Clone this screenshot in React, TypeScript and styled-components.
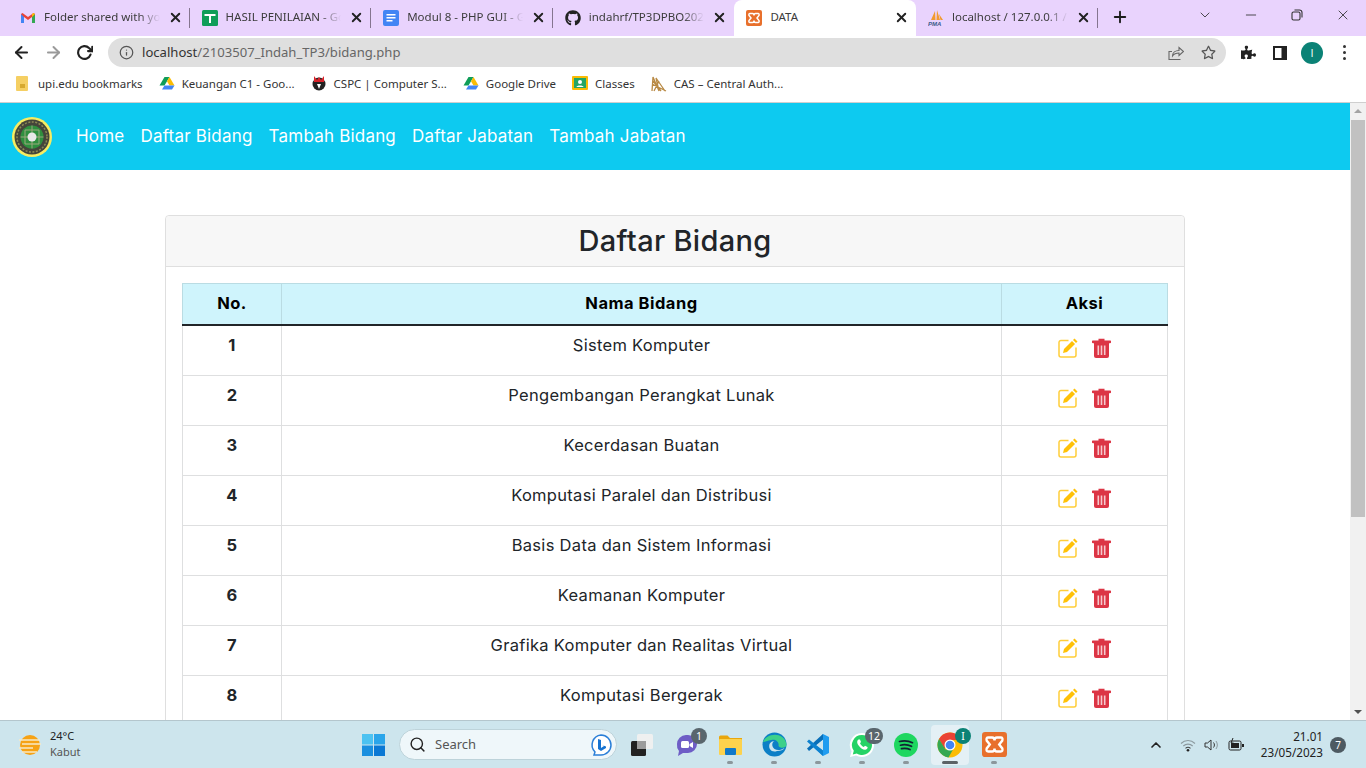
import React from 'react'
import styled, { createGlobalStyle } from 'styled-components'
import { FaGithub, FaPuzzlePiece, FaRegStar } from 'react-icons/fa'
import { FiArrowLeft, FiArrowRight, FiChevronDown, FiChevronUp, FiInfo, FiMinus, FiPlus, FiRotateCw, FiSearch, FiX } from 'react-icons/fi'

const GlobalStyle = createGlobalStyle`
  html, body { margin: 0; padding: 0; height: 100%; overflow: hidden; }
  body { font-family: "Open Sans", "Liberation Sans", sans-serif; background: #fff; }
  * { box-sizing: border-box; }
`

const Screen = styled.div`
  width: 1366px; height: 768px; display: flex; flex-direction: column; overflow: hidden;
`
const TabStrip = styled.div`
  height: 36px; flex: none; background: #e9d3fd; display: flex; align-items: flex-start; padding: 0 0 0 8px;
`
const Tab = styled.div<{ $active?: boolean; $sep?: boolean }>`
  width: 181.6px; height: 36px; flex: none; display: flex; align-items: center; padding: 0 7px 1px 12px; gap: 8px;
  font-family: "Noto Sans", sans-serif; font-size: 11.5px; color: #3c3c3c; position: relative;
  background: ${p => (p.$active ? '#fff' : 'transparent')};
  border-radius: ${p => (p.$active ? '8px 8px 0 0' : '0')};
  &::after {
    content: ''; position: absolute; right: 0; top: 8px; height: 20px; width: 1px;
    background: ${p => (p.$sep ? '#85758f' : 'transparent')};
  }
`
const TabTitle = styled.span<{ $fade?: boolean }>`
  flex: 1; min-width: 0; white-space: nowrap; overflow: hidden; padding-bottom: 2px;
  ${p => p.$fade && 'mask-image: linear-gradient(90deg, #000 82%, transparent 100%);'}
`
const TabClose = styled.span`
  display: flex; color: #222; font-size: 15px;
`
const NewTab = styled.span`
  display: flex; margin-left: 13px; margin-top: 8px; font-size: 18px; color: #1c1c1c;
`
const WindowControls = styled.div`
  margin-left: auto; display: flex; align-items: center; height: 29px; color: #333;
`
const WindowButton = styled.span`
  width: 46px; display: flex; justify-content: center; font-size: 16px;
`
const Toolbar = styled.div`
  height: 33px; flex: none; background: #fff; display: flex; align-items: center; padding: 0 0 0 12px;
`
const NavIcon = styled.span<{ $muted?: boolean }>`
  width: 32px; display: flex; font-size: 19px; color: ${p => (p.$muted ? '#9a9a9a' : '#222')};
`
const Omnibox = styled.div`
  width: 1118px; height: 29px; background: #dfdfdf; border-radius: 15px; display: flex; align-items: center; padding: 0 10px 0 11px;
  font-family: "Noto Sans", sans-serif; font-size: 13.1px; color: #666;
`
const UrlText = styled.span`
  padding-bottom: 2px;
  b { font-weight: 400; color: #333; }
`
const OmniIcon = styled.span<{ $left?: boolean }>`
  display: flex; font-size: 15px; color: #555; margin: ${p => (p.$left ? '0 8px 0 0' : '0 0 0 17px')};
`
const Spacer = styled.span`
  flex: 1;
`
const ToolbarEnd = styled.div`
  display: flex; align-items: center; margin-left: 6px; color: #222;
`
const ToolSlot = styled.span`
  width: 32px; display: flex; align-items: center; justify-content: center;
`
const Avatar = styled.span`
  width: 22px; height: 22px; border-radius: 50%; background: #0b8276; color: #fff; font-size: 11px;
  display: flex; align-items: center; justify-content: center;
`
const Kebab = styled.span`
  display: flex; flex-direction: column; gap: 3px;
  i { width: 3px; height: 3px; border-radius: 50%; background: #333; display: block; }
`
const Bookmarks = styled.div`
  height: 34px; flex: none; background: #fff; display: flex; align-items: center; padding: 0 0 5px 16px; gap: 16px;
  border-bottom: 1px solid #cfcfcf; font-family: "Noto Sans", sans-serif; font-size: 11.5px; color: #333;
`
const Bookmark = styled.span`
  display: flex; align-items: center; gap: 7px; white-space: nowrap;
`
const Viewport = styled.div`
  flex: 1; min-height: 0; display: flex; overflow: hidden;
`
const Page = styled.div`
  flex: 1; min-width: 0; overflow: hidden; background: #fff; font-family: "Inter", "Liberation Sans", sans-serif;
`
const Navbar = styled.nav`
  height: 67px; background: #0dcaf0; display: flex; align-items: center; padding: 0 12px;
`
const Menu = styled.ul`
  list-style: none; margin: 0 0 0 24px; padding: 0 0 2px; display: flex; gap: 16px;
`
const MenuLink = styled.li`
  color: #fff; font-size: 17px; font-weight: 400; letter-spacing: .2px; white-space: nowrap;
`
const Card = styled.section`
  width: 1020px; margin: 45px 0 0 165px; border: 1px solid #dfdfdf; border-radius: 4px; background: #fff;
`
const CardHeader = styled.header`
  height: 51px; background: #f7f7f7; border-bottom: 1px solid #dfdfdf; border-radius: 4px 4px 0 0;
  display: flex; align-items: center; justify-content: center; padding-bottom: 2px;
  font-size: 29px; font-weight: 500; letter-spacing: .3px; color: #212529;
`
const CardBody = styled.div`
  padding: 16px;
`
const Table = styled.table`
  width: 985px; border-collapse: collapse; table-layout: fixed; color: #212529;
`
const HeadCell = styled.th<{ $w: number }>`
  width: ${p => p.$w}px; height: 41px; background: #cff4fc; border: 1px solid #badce3; border-bottom: 2px solid #212529;
  font-size: 16.5px; font-weight: 700; letter-spacing: .5px; color: #000; padding: 0 0 2px;
`
const Row = styled.tr`
  height: 50px;
  &:first-child { height: 51px; }
`
const Cell = styled.td<{ $bold?: boolean }>`
  border: 1px solid #dedfe0; text-align: center; vertical-align: top; padding: 7px 8px 0;
  font-size: 16.5px; line-height: 24px; letter-spacing: .3px; font-weight: ${p => (p.$bold ? 700 : 400)}; white-space: nowrap;
`
const Actions = styled.div`
  display: flex; justify-content: center; gap: 14px; padding-top: 5px;
`
const Scrollbar = styled.div`
  width: 16px; flex: none; background: #f1f1f1; display: flex; flex-direction: column; align-items: center; justify-content: space-between; position: relative;
`
const ScrollThumb = styled.div`
  position: absolute; top: 17px; left: 1px; right: 1px; height: 397px; background: #c1c1c1;
`
const ScrollArrow = styled.i<{ $down?: boolean }>`
  display: block; margin: 6px 0; width: 0; height: 0; border-left: 4px solid transparent; border-right: 4px solid transparent;
  ${p => (p.$down ? 'border-top: 4px solid #505050;' : 'border-bottom: 4px solid #a3a3a3;')}
`
const Taskbar = styled.footer`
  height: 48px; flex: none; background: #cde5ed; border-top: 1px solid #b4c6cd; display: flex; align-items: center;
  font-family: "Noto Sans", sans-serif; color: #222;
`
const Weather = styled.div`
  width: 362px; flex: none; display: flex; align-items: center; gap: 9px; padding-left: 19px;
`
const WeatherText = styled.div`
  display: flex; flex-direction: column; font-size: 11px; line-height: 16px; padding-bottom: 2px;
  small { font-size: 11px; color: #555; }
`
const Dock = styled.div`
  display: flex; align-items: center;
`
const SearchBox = styled.div`
  width: 218px; height: 31px; margin: 0 3px 0 14px; border-radius: 16px; background: #eff7fa; border: 1px solid #bdd3da; display: flex; align-items: center; padding: 0 3px 0 9px;
  font-size: 13px; color: #555; gap: 9px;
`
const SearchLabel = styled.span`
  padding-bottom: 2px;
`
const DockItem = styled.span<{ $active?: boolean; $dot?: boolean }>`
  width: 44px; height: 40px; display: flex; align-items: center; justify-content: center; position: relative;
  &::before {
    content: ''; position: absolute; inset: 0 3px; border-radius: 4px;
    background: ${p => (p.$active ? '#e4f0f5' : 'transparent')};
  }
  svg { position: relative; }
  &::after {
    content: ''; position: absolute; bottom: 1px; left: 50%; transform: translateX(-50%); height: 3px; border-radius: 2px;
    width: ${p => (p.$active ? '16px' : '6px')}; background: ${p => (p.$active ? '#5c6367' : '#8b979c')};
    display: ${p => (p.$dot || p.$active ? 'block' : 'none')};
  }
`
const CountBadge = styled.b<{ $color?: string }>`
  position: absolute; top: 3px; right: 1px; min-width: 16px; height: 16px; padding: 0 3px; border-radius: 8px; background: ${p => p.$color || '#59666d'};
  color: #fff; font-size: 10.5px; font-weight: 400; display: flex; align-items: center; justify-content: center;
`
const Tray = styled.div`
  margin-left: auto; display: flex; align-items: center; color: #222; padding-right: 20px;
`
const TrayIcon = styled.span<{ $gap: number }>`
  display: flex; font-size: 16px; margin-right: ${p => p.$gap}px;
`
const Clock = styled.div`
  text-align: right; font-size: 11.7px; line-height: 16px; margin-right: 7px; padding-bottom: 2px;
`
const Notify = styled.span`
  width: 16px; height: 16px; border-radius: 50%; background: #4d5a62; color: #fff; font-size: 10px; display: flex; align-items: center; justify-content: center;
`

const EditIcon = () => (
  <svg width="20" height="20" viewBox="0 0 20 20">
    <path d="M10.500 2.500H3A2 2 0 0 0 1 4.500V17a2 2 0 0 0 2 2h13a2 2 0 0 0 2-2V9.500" fill="none" stroke="#ffc107" strokeWidth="1.500" opacity=".8" />
    <path d="M5 15l1-4 8-8 3 3-8 8z" fill="#ffc107" />
    <path d="M15 2l1.500-1.500 3 3L18 5z" fill="#ffc107" />
  </svg>
)
const TrashIcon = () => (
  <svg width="19" height="20" viewBox="0 0 19 20">
    <path d="M6.500 2.500V.8h6v1.700H18a1 1 0 0 1 0 2.700H1a1 1 0 0 1 0-2.700z" fill="#dc3545" />
    <path d="M2 5h15v13a2 2 0 0 1-2 2H4a2 2 0 0 1-2-2z" fill="#dc3545" />
    <path d="M5.500 7.500h1.600v9.500H5.500zM8.700 7.500h1.600v9.500H8.700zM11.900 7.500h1.600v9.500h-1.600z" fill="#f6c9cd" />
  </svg>
)
const GmailIcon = () => (
  <svg width="16" height="16" viewBox="0 0 16 16">
    <path d="M1 4v9h3V7l4 3 4-3v6h3V4l-1.500-1L8 7 2.500 3z" fill="#ea4335" />
    <path d="M1 4v9h3V7z" fill="#4285f4" />
    <path d="M15 4v9h-3V7z" fill="#34a853" />
    <path d="M12 7l3-3-1.500-1L12 4z" fill="#fbbc04" />
  </svg>
)
const SheetsIcon = () => (
  <svg width="16" height="16" viewBox="0 0 16 16">
    <rect width="16" height="16" rx="1.500" fill="#0f9d58" />
    <path d="M2.500 4h11v2h-4.500v7H7V6H2.500z" fill="#fff" />
  </svg>
)
const DocsIcon = () => (
  <svg width="16" height="16" viewBox="0 0 16 16">
    <rect width="16" height="16" rx="2" fill="#4285f4" />
    <path d="M3.500 4h9v1.500h-9zM3.500 7h9v1.500h-9zM3.500 10h6v1.500h-6z" fill="#fff" />
  </svg>
)
const XamppIcon = ({ size = 16 }: { size?: number }) => (
  <svg width={size} height={size} viewBox="0 0 16 16">
    <rect width="16" height="16" rx="2" fill="#e8702c" />
    <path d="M4 3.500h2.500Q8 3.500 8 5.500q0-2 1.500-2H12q1.500 0 1 2L11 8l2 2.500q.5 2-1 2H9.500Q8 12.500 8 10.500q0 2-1.500 2H4q-1.500 0-1-2L5 8 3 5.500q-.5-2 1-2z" fill="none" stroke="#fff" strokeWidth="1.500" />
  </svg>
)
const PmaIcon = () => (
  <svg width="16" height="16" viewBox="0 0 16 16">
    <path d="M3 10 7 1l.5 9zM8.500 10 9 0l3 10zM12.500 10 11 4l4 6z" fill="#f29a2e" />
    <text x="0" y="15.500" fontSize="6" fontStyle="italic" fontWeight="700" fontFamily="Liberation Sans, sans-serif" fill="#3c5a8a">PMA</text>
  </svg>
)
const DriveIcon = () => (
  <svg width="16" height="16" viewBox="0 0 16 16">
    <path d="M5.500 2h5l-5 8.500H.5z" fill="#0f9d58" />
    <path d="M10.500 2l5 8.500h-5L8 6.200z" fill="#fbbc04" />
    <path d="M3 14.500l2.500-4h10l-2.500 4z" fill="#4285f4" />
  </svg>
)
const FolderBookmark = () => (
  <svg width="15" height="15" viewBox="0 0 15 15">
    <rect width="12" height="15" rx="1" fill="#f5cf63" />
    <path d="M4 8h5v4H4z" fill="#d7a92f" />
  </svg>
)
const UpiIcon = () => (
  <svg width="16" height="16" viewBox="0 0 16 16">
    <circle cx="8" cy="9" r="6.500" fill="#222" />
    <path d="M3 1l3 4 2-3 2 3 3-4v6H3z" fill="#d8232a" />
    <path d="M6 9h4l-2 5z" fill="#fff" />
  </svg>
)
const ClassroomIcon = () => (
  <svg width="16" height="16" viewBox="0 0 16 16">
    <rect width="16" height="14" y="1" rx="1" fill="#f9bb04" />
    <rect x="2" y="3" width="12" height="10" fill="#23a566" />
    <circle cx="8" cy="7" r="2" fill="#fff" />
    <path d="M4.500 12c0-2 7-2 7 0z" fill="#fff" />
  </svg>
)
const CasIcon = () => (
  <svg width="16" height="17" viewBox="0 0 16 17" fill="none" stroke="#b98a45" strokeWidth="1.300">
    <path d="M1 16 2 2l6 14L5 3l9 13M1 9l14 7M3 16 8 6M2 6l8 10" />
  </svg>
)
const Seal = () => (
  <svg width="40" height="40" viewBox="0 0 40 40">
    <circle cx="20" cy="20" r="20" fill="#f6ec62" />
    <circle cx="20" cy="20" r="17.500" fill="#44453a" />
    <circle cx="20" cy="20" r="15" fill="none" stroke="#8d8a55" strokeWidth="1.500" strokeDasharray="2 1.500" />
    <circle cx="20" cy="20" r="11.500" fill="#2f8f3e" />
    <path d="M20 8.500v23M8.500 20h23M13 13h14v14H13z" fill="none" stroke="#9aa87c" strokeWidth="1" />
    <circle cx="20" cy="20" r="4.500" fill="#e8e8e8" />
  </svg>
)
const ShareIcon = () => (
  <svg width="16" height="16" viewBox="0 0 16 16" fill="none" stroke="#666" strokeWidth="1.100">
    <path d="M12.500 14.500H1V6.500h3" />
    <path d="M4.500 11c0-3.500 3-5.500 6.500-5.500V2.500l4.500 4-4.500 4V8c-3 0-5 .8-6.500 3z" />
  </svg>
)
const PanelIcon = () => (
  <svg width="14" height="14" viewBox="0 0 14 14">
    <path d="M0 0h14v14H0zM2 2v10h6.500V2z" fill="#222" fillRule="evenodd" />
  </svg>
)
const RestoreIcon = () => (
  <svg width="12" height="12" viewBox="0 0 12 12" fill="none" stroke="#333" strokeWidth="1.100">
    <rect x="1" y="3" width="8" height="8" rx="1.500" />
    <path d="M3.500 1h5A2.500 2.500 0 0 1 11 3.500v5" />
  </svg>
)
const WeatherIcon = () => (
  <svg width="22" height="22" viewBox="0 0 22 22">
    <circle cx="11" cy="11" r="10" fill="#f6a215" />
    <path d="M0 6h21M3 10h19M0 14h14M3 18h15" stroke="#f8e9c5" strokeWidth="1.500" />
  </svg>
)
const StartIcon = () => (
  <svg width="23" height="23" viewBox="0 0 23 23">
    <path d="M0 1h11v10.500H0z" fill="#4cc2f1" />
    <path d="M12 1h11v10.500H12z" fill="#2aa5ea" />
    <path d="M0 12.500h11V23H0z" fill="#1a8fdf" />
    <path d="M12 12.500h11V23H12z" fill="#0a78d4" />
  </svg>
)
const BingIcon = () => (
  <svg width="24" height="24" viewBox="0 0 24 24">
    <path d="M12 2a10 10 0 0 1 0 20H5l1-3A10 10 0 0 1 12 2z" fill="#fff" stroke="#2b7fd8" strokeWidth="1.500" />
    <path d="M9 6l3 1v8l3-2-2-1 4 1.500V15l-5 3-3-2z" fill="#1673d1" />
  </svg>
)
const TaskViewIcon = () => (
  <svg width="24" height="24" viewBox="0 0 24 24">
    <rect x="1" y="8" width="15" height="15" rx="1.500" fill="#222" />
    <rect x="7" y="1" width="16" height="15" rx="1.500" fill="#f0f0f0" opacity=".95" />
    <rect x="7" y="8" width="9" height="8" fill="#9c9c9c" />
  </svg>
)
const TeamsIcon = () => (
  <svg width="24" height="24" viewBox="0 0 24 24">
    <path d="M12 2h2a9 9 0 0 1 0 18H9l-5 3 1-5A9 9 0 0 1 3 11a9 9 0 0 1 9-9z" fill="#6e5dc6" />
    <rect x="7" y="8" width="8" height="7" rx="1.500" fill="#fff" />
    <path d="M15.500 11l3.500-2v6l-3.500-2z" fill="#fff" />
  </svg>
)
const FilesIcon = () => (
  <svg width="25" height="24" viewBox="0 0 25 24">
    <path d="M1 4a1.500 1.500 0 0 1 1.500-1.500h7L12 5h12v16H1z" fill="#e9a60d" />
    <rect x="1" y="6" width="23" height="16" rx="1" fill="#fcd24d" />
    <rect x="7" y="15" width="11" height="7" rx="1" fill="#0f79c9" />
  </svg>
)
const EdgeIcon = () => (
  <svg width="25" height="25" viewBox="0 0 25 25">
    <circle cx="12.500" cy="12.500" r="12" fill="#0c7fc6" />
    <path d="M1 10C4 1 22-1 24.500 12c.5 4-6 5-8 2 1-4-3-7-7-6-4 .5-7 2-8.500 2z" fill="#3dd08a" />
    <path d="M15 19c-5 2-9-2-7.500-7 1-2 3-3 5-3-3 1-3 6 0 8 3 2 7 1 10-1-1 2-4 3-7.500 3z" fill="#cde5ed" />
  </svg>
)
const VSCodeIcon = () => (
  <svg width="24" height="24" viewBox="0 0 24 24">
    <path d="M17 1l6 3v16l-6 3-11-10z" fill="#1f9cf0" />
    <path d="M17 6.500v11L9.500 12z" fill="#cde5ed" />
    <path d="M17 1L1 15.500 3 18 17 6.500z" fill="#0a6fb8" />
    <path d="M1 8.500l2-2L17 17.500V23z" fill="#0e82cf" />
  </svg>
)
const WhatsappIcon = () => (
  <svg width="26" height="26" viewBox="0 0 26 26">
    <path d="M13 1a12 12 0 1 1-6 22.400L1 25l1.600-5.800A12 12 0 0 1 13 1z" fill="#fff" />
    <path d="M13 3a10 10 0 1 1-5.300 18.500L3.800 22.500l1-3.700A10 10 0 0 1 13 3z" fill="#25d366" />
    <path d="M9.500 7.500c-2 1.500-1.500 4 .5 6.500s5 4.500 7 3.500c1.500-.7 1.800-2 1.500-2.500l-2.500-1.300-1.200 1.300c-1.500-.5-3-2-3.800-3.700l1-1.200-1-2.600z" fill="#fff" />
  </svg>
)
const SpotifyIcon = () => (
  <svg width="24" height="24" viewBox="0 0 24 24">
    <circle cx="12" cy="12" r="12" fill="#1ed760" />
    <path d="M5.500 8.500c4.500-1.200 9-.8 13 1.200M6.500 12.200c3.800-1 7.500-.6 11 1.100M7.500 15.700c3-.7 6-.4 8.500 .9" fill="none" stroke="#123" strokeWidth="1.700" strokeLinecap="round" />
  </svg>
)
const ChromeIcon = () => (
  <svg width="26" height="26" viewBox="0 0 26 26">
    <circle cx="13" cy="13" r="12.500" fill="#fbbc04" />
    <path d="M13 .5A12.500 12.500 0 0 0 2 7l5.500 9.500L13 8h11a12.500 12.500 0 0 0-11-7.500z" fill="#ea4335" />
    <path d="M2 7a12.500 12.500 0 0 0 9.500 18.500L16 17.500H8.500z" fill="#34a853" />
    <circle cx="13" cy="13" r="5.500" fill="#fff" />
    <circle cx="13" cy="13" r="4.300" fill="#4285f4" />
  </svg>
)
const WifiIcon = () => (
  <svg width="16" height="16" viewBox="0 0 16 16" fill="none" stroke="#8d9a9f" strokeWidth="1.100">
    <path d="M1 6.500c4-4 10-4 14 0M3.300 9c2.700-2.500 6.700-2.500 9.400 0" />
    <path d="M5.500 11.300c1.500-1.300 3.500-1.300 5 0" stroke="#444" />
    <circle cx="8" cy="13.300" r="1.300" fill="#222" stroke="none" />
  </svg>
)
const SpeakerIcon = () => (
  <svg width="16" height="16" viewBox="0 0 16 16" fill="none" stroke="#333" strokeWidth="1">
    <path d="M1 6h2.500L7 3v10l-3.500-3H1z" />
    <path d="M9.500 5.500c1.200 1.500 1.200 3.500 0 5" />
    <path d="M12 4c1.800 2.500 1.800 5.500 0 8" stroke="#8d9a9f" />
  </svg>
)
const BatteryIcon = () => (
  <svg width="16" height="14" viewBox="0 0 16 14">
    <rect x="1" y="3" width="12" height="9" rx="1.500" fill="none" stroke="#222" />
    <path d="M3 5h8v5H3zM14 6h2v3h-2z" fill="#222" />
    <path d="M5 0 3 5h2.500L4.500 8" stroke="#222" fill="none" />
  </svg>
)

const tabs = [
  { title: 'Folder shared with you', icon: <GmailIcon />, sep: true },
  { title: 'HASIL PENILAIAN - Go', icon: <SheetsIcon />, sep: true },
  { title: 'Modul 8 - PHP GUI - G', icon: <DocsIcon />, sep: true },
  { title: 'indahrf/TP3DPBO2023', icon: <FaGithub size={16} color="#222" />, sep: false },
  { title: 'DATA', icon: <XamppIcon />, active: true },
  { title: 'localhost / 127.0.0.1 / d', icon: <PmaIcon />, sep: true },
]
const marks = [
  { label: 'upi.edu bookmarks', icon: <FolderBookmark /> },
  { label: 'Keuangan C1 - Goo...', icon: <DriveIcon /> },
  { label: 'CSPC | Computer S...', icon: <UpiIcon /> },
  { label: 'Google Drive', icon: <DriveIcon /> },
  { label: 'Classes', icon: <ClassroomIcon /> },
  { label: 'CAS – Central Auth...', icon: <CasIcon /> },
]
const bidang = [
  'Sistem Komputer',
  'Pengembangan Perangkat Lunak',
  'Kecerdasan Buatan',
  'Komputasi Paralel dan Distribusi',
  'Basis Data dan Sistem Informasi',
  'Keamanan Komputer',
  'Grafika Komputer dan Realitas Virtual',
  'Komputasi Bergerak',
]

export default function App() {
  return (
    <Screen>
      <GlobalStyle />
      <TabStrip>
        {tabs.map(t => (
          <Tab key={t.title} $active={t.active} $sep={t.sep}>
            {t.icon}
            <TabTitle $fade={!t.active}>{t.title}</TabTitle>
            <TabClose><FiX strokeWidth={3} /></TabClose>
          </Tab>
        ))}
        <NewTab><FiPlus strokeWidth={2.500} /></NewTab>
        <WindowControls>
          <WindowButton><FiChevronDown strokeWidth={1.300} /></WindowButton>
          <WindowButton><FiMinus strokeWidth={1.300} /></WindowButton>
          <WindowButton><RestoreIcon /></WindowButton>
          <WindowButton><FiX strokeWidth={1.300} /></WindowButton>
        </WindowControls>
      </TabStrip>
      <Toolbar>
        <NavIcon><FiArrowLeft strokeWidth={2.500} /></NavIcon>
        <NavIcon $muted><FiArrowRight strokeWidth={2.500} /></NavIcon>
        <NavIcon><FiRotateCw strokeWidth={3} size={17} /></NavIcon>
        <Omnibox>
          <OmniIcon $left><FiInfo /></OmniIcon>
          <UrlText><b>localhost</b>/2103507_Indah_TP3/bidang.php</UrlText>
          <Spacer />
          <OmniIcon><ShareIcon /></OmniIcon>
          <OmniIcon><FaRegStar /></OmniIcon>
        </Omnibox>
        <ToolbarEnd>
          <ToolSlot><FaPuzzlePiece size={15} /></ToolSlot>
          <ToolSlot><PanelIcon /></ToolSlot>
          <ToolSlot><Avatar>I</Avatar></ToolSlot>
          <ToolSlot><Kebab><i /><i /><i /></Kebab></ToolSlot>
        </ToolbarEnd>
      </Toolbar>
      <Bookmarks>
        {marks.map(m => (
          <Bookmark key={m.label}>{m.icon}{m.label}</Bookmark>
        ))}
      </Bookmarks>
      <Viewport>
        <Page>
          <Navbar>
            <Seal />
            <Menu>
              <MenuLink>Home</MenuLink>
              <MenuLink>Daftar Bidang</MenuLink>
              <MenuLink>Tambah Bidang</MenuLink>
              <MenuLink>Daftar Jabatan</MenuLink>
              <MenuLink>Tambah Jabatan</MenuLink>
            </Menu>
          </Navbar>
          <Card>
            <CardHeader>Daftar Bidang</CardHeader>
            <CardBody>
              <Table>
                <thead>
                  <tr>
                    <HeadCell $w={99}>No.</HeadCell>
                    <HeadCell $w={720}>Nama Bidang</HeadCell>
                    <HeadCell $w={166}>Aksi</HeadCell>
                  </tr>
                </thead>
                <tbody>
                  {bidang.map((name, i) => (
                    <Row key={name}>
                      <Cell $bold>{i + 1}</Cell>
                      <Cell>{name}</Cell>
                      <Cell>
                        <Actions>
                          <EditIcon />
                          <TrashIcon />
                        </Actions>
                      </Cell>
                    </Row>
                  ))}
                </tbody>
              </Table>
            </CardBody>
          </Card>
        </Page>
        <Scrollbar>
          <ScrollArrow />
          <ScrollThumb />
          <ScrollArrow $down />
        </Scrollbar>
      </Viewport>
      <Taskbar>
        <Weather>
          <WeatherIcon />
          <WeatherText>24°C<small>Kabut</small></WeatherText>
        </Weather>
        <Dock>
          <StartIcon />
          <SearchBox>
            <FiSearch size={17} color="#222" />
            <SearchLabel>Search</SearchLabel>
            <Spacer />
            <BingIcon />
          </SearchBox>
          <DockItem><TaskViewIcon /></DockItem>
          <DockItem><TeamsIcon /><CountBadge>1</CountBadge></DockItem>
          <DockItem $dot><FilesIcon /></DockItem>
          <DockItem $dot><EdgeIcon /></DockItem>
          <DockItem $dot><VSCodeIcon /></DockItem>
          <DockItem $dot><WhatsappIcon /><CountBadge>12</CountBadge></DockItem>
          <DockItem $dot><SpotifyIcon /></DockItem>
          <DockItem $active><ChromeIcon /><CountBadge $color="#0b8276">I</CountBadge></DockItem>
          <DockItem $dot><XamppIcon size={25} /></DockItem>
        </Dock>
        <Tray>
          <TrayIcon $gap={16}><FiChevronUp strokeWidth={2.500} /></TrayIcon>
          <TrayIcon $gap={8}><WifiIcon /></TrayIcon>
          <TrayIcon $gap={8}><SpeakerIcon /></TrayIcon>
          <TrayIcon $gap={17}><BatteryIcon /></TrayIcon>
          <Clock>21.01<br />23/05/2023</Clock>
          <Notify>7</Notify>
        </Tray>
      </Taskbar>
    </Screen>
  )
}
